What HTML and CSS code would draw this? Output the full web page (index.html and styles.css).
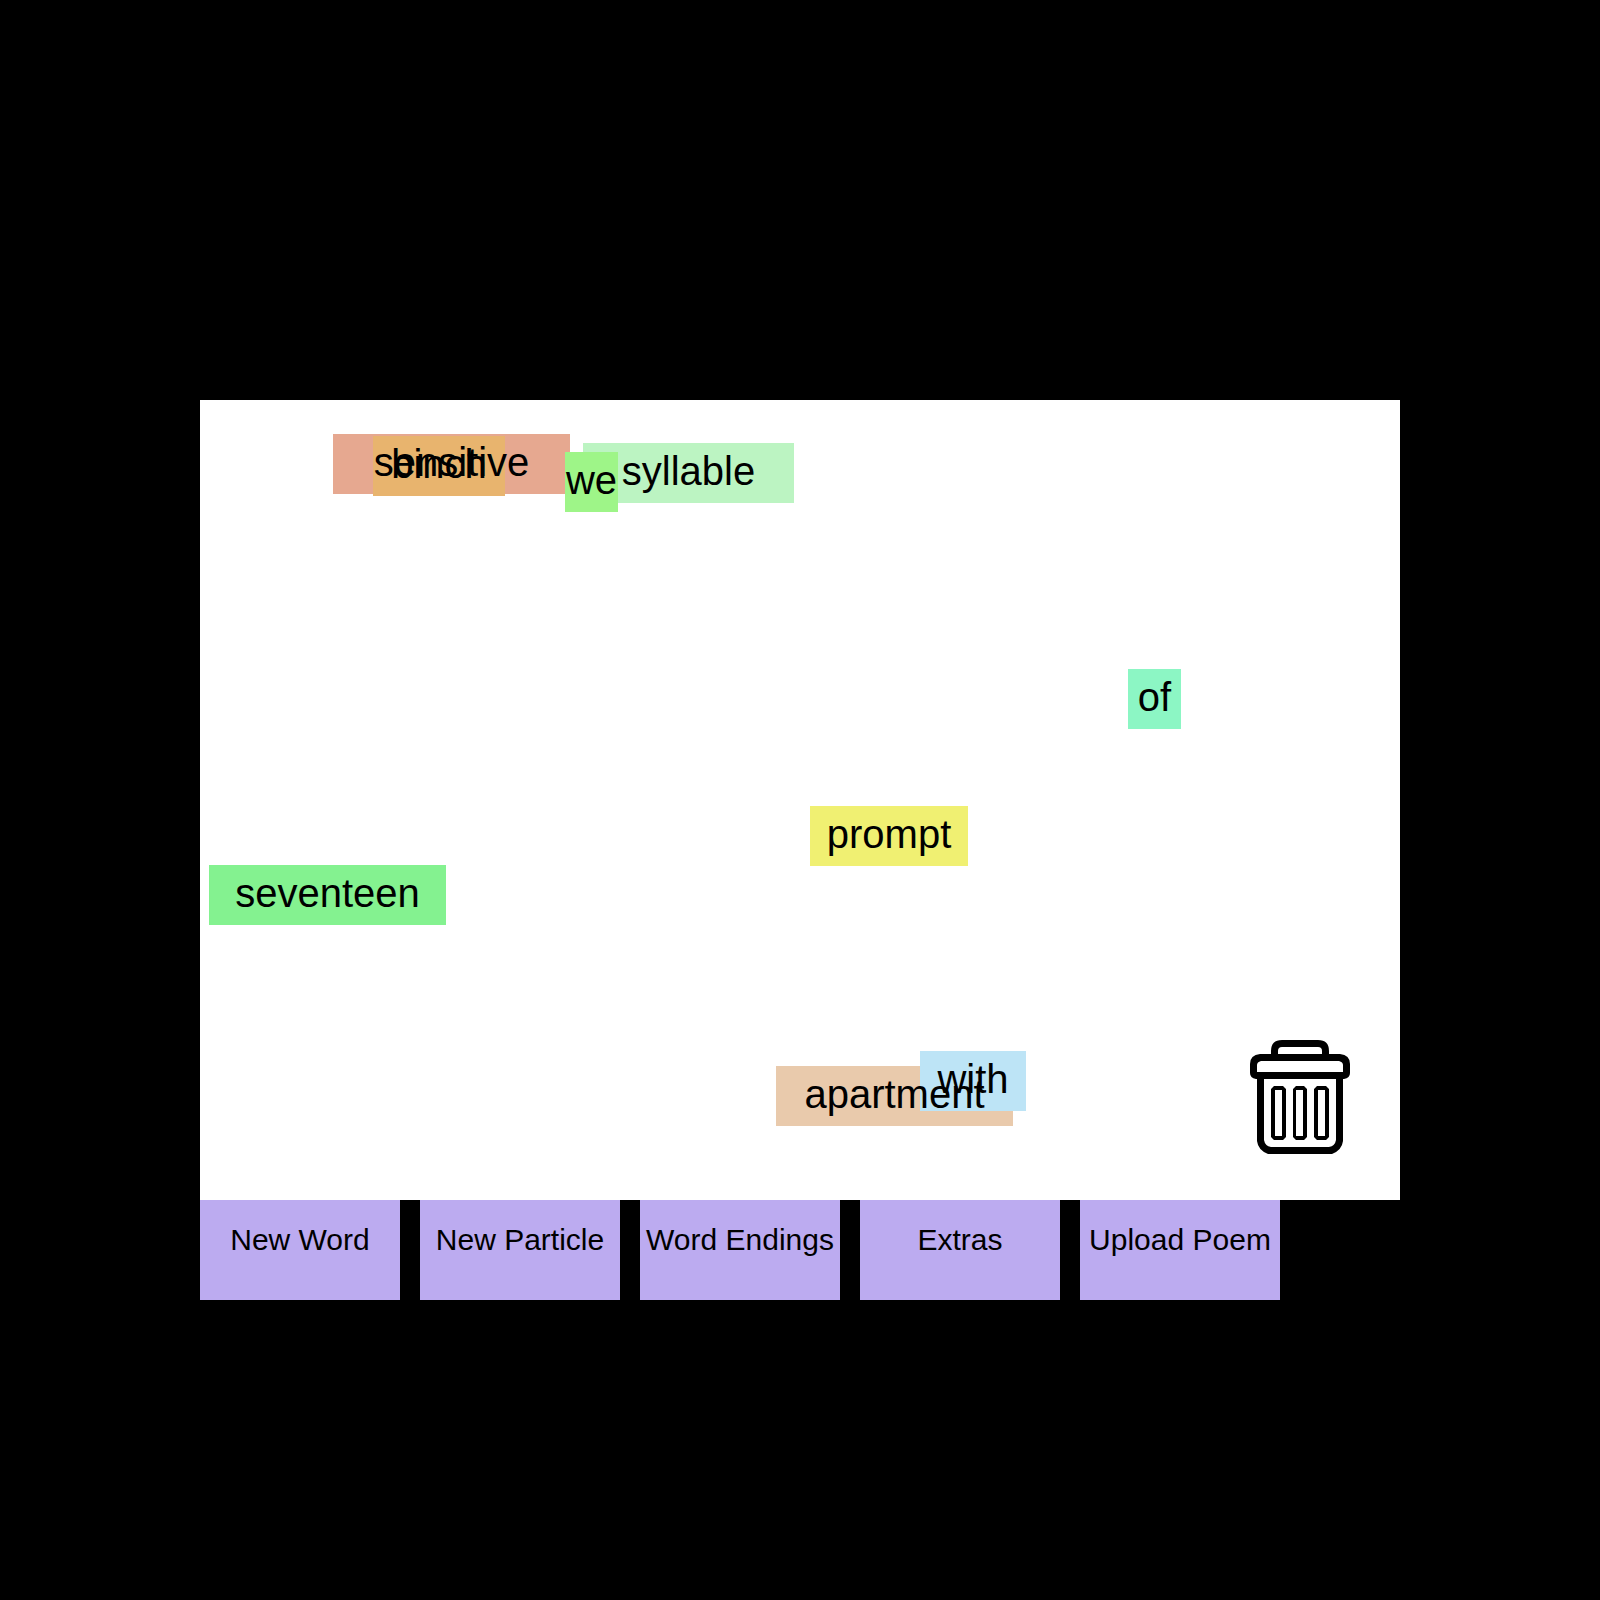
FILE: index.html
```html
<!DOCTYPE html>
<html lang="en">
<head>
<meta charset="utf-8">
<meta name="viewport" content="width=device-width, initial-scale=1">
<title>Magnet Poetry</title>
<link rel="stylesheet" href="styles.css">
</head>
<body>
<main class="app">
  <section class="board" aria-label="Poem board">
    <div class="magnet magnet-9 sensitive"><span class="word">sensitive</span></div>
    <div class="magnet magnet-5 binch"><span class="word">binch</span></div>
    <div class="magnet magnet-8 syllable"><span class="word">syllable</span></div>
    <div class="magnet magnet-2 we"><span class="word">we</span></div>
    <div class="magnet magnet-2 of"><span class="word">of</span></div>
    <div class="magnet magnet-6 prompt"><span class="word">prompt</span></div>
    <div class="magnet magnet-9 seventeen"><span class="word">seventeen</span></div>
    <div class="magnet magnet-9 apartment"><span class="word">apartment</span></div>
    <div class="magnet magnet-4 with"><span class="word">with</span></div>
    <svg class="trash" viewBox="0 0 100 114" role="img" aria-label="Trash">
      <path fill="none" stroke="#000" stroke-width="7" d="M24.500 16V11Q24.500 3.500 32 3.500H68Q75.500 3.500 75.500 11V16"/>
      <path d="M7 37V101Q8 110 18 114H82Q92 110 93 101V37H86V100Q85 106 79 107H21Q15 106 14 100V37Z"/>
      <path fill-rule="evenodd" d="M10 14H90Q100 15 100 24V33Q100 38 94 39H6Q0 38 0 33V24Q0 15 10 14ZM11 21Q7 22 7 25V32H93V25Q93 22 89 21Z"/>
      <path fill-rule="evenodd" d="M24 46H33L36 49V97L33 100H24L21 97V49ZM25 50V96H32V50Z"/>
      <path fill-rule="evenodd" d="M46 46H54L57 49V97L54 100H46L43 97V49ZM46 50V96H53V50Z"/>
      <path fill-rule="evenodd" d="M67 46H76L79 49V97L76 100H67L64 97V49ZM68 50V96H75V50Z"/>
    </svg>
  </section>
  <nav class="tools" aria-label="Poem tools">
    <button type="button" class="tool">New Word</button>
    <button type="button" class="tool">New Particle</button>
    <button type="button" class="tool">Word Endings</button>
    <button type="button" class="tool">Extras</button>
    <button type="button" class="tool">Upload Poem</button>
  </nav>
</main>
</body>
</html>
```
FILE: styles.css
```css
* {
  box-sizing: border-box;
}

body {
  margin: 0;
  background: #000;
  color: #000;
  font-family: "Liberation Sans", Arial, Helvetica, sans-serif;
}

.app {
  width: 75%;
  margin: 0 auto;
  padding: 25vh 0 40px;
}

.board {
  position: relative;
  aspect-ratio: 3 / 2;
  background: #fff;
}

/* Every tile is sized by its number of letters. */
.magnet {
  position: absolute;
  height: 60px;
  font-size: 40px;
  line-height: 56px;
  text-align: center;
  white-space: nowrap;
}

.magnet-2 { width: 53px; }
.magnet-4 { width: 106px; }
.magnet-5 { width: 132px; }
.magnet-6 { width: 158px; }
.magnet-8 { width: 211px; }
.magnet-9 { width: 237px; }

/* Words stay readable above overlapping tiles. */
.word {
  position: relative;
  z-index: 1;
}

.sensitive { left: 133px; top: 34px; background: #e6a890; }
.binch { left: 173px; top: 36px; background: #e8b46e; }
.syllable { left: 383px; top: 43px; background: #bcf4c2; }
.we { left: 365px; top: 52px; background: #9ef588; }
.of { left: 928px; top: 269px; background: #8cf6c4; }
.prompt { left: 610px; top: 406px; background: #f0f072; }
.seventeen { left: 9px; top: 465px; background: #84f290; }
.apartment { left: 576px; top: 666px; background: #e9caac; }
.with { left: 720px; top: 651px; background: #bde4f6; }

.trash {
  position: absolute;
  right: 50px;
  bottom: 46px;
  width: 100px;
  height: 114px;
}

.tools {
  display: flex;
  flex-wrap: wrap;
  gap: 20px;
}

.tool {
  width: 200px;
  height: 100px;
  padding: 0 0 20px;
  border: 0;
  background: #bcabf0;
  color: inherit;
  font: inherit;
  font-size: 30px;
  line-height: 80px;
  white-space: nowrap;
  cursor: pointer;
}
```
